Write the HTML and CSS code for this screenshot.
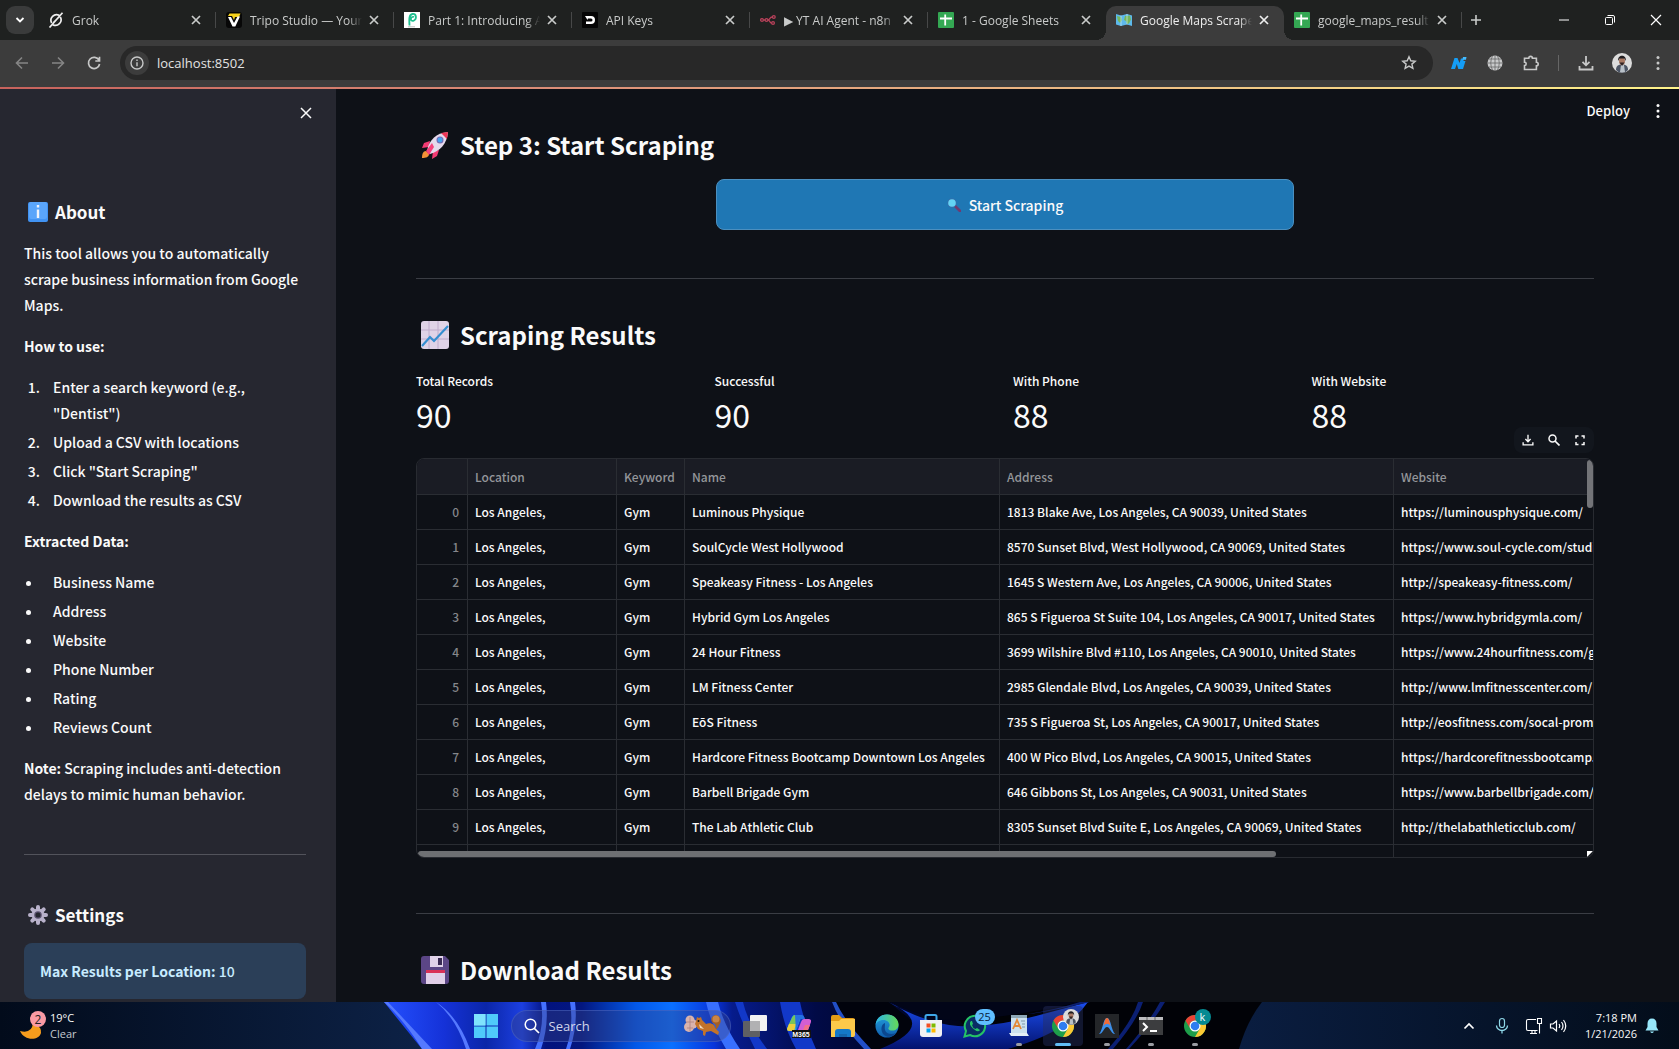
FILE: index.html
```html
<!DOCTYPE html>
<html lang="en">
  <head>
    <meta charset="utf-8" />
    <meta name="viewport" content="width=device-width, initial-scale=1.0" />
    <link rel="stylesheet" href="styles.css">
    <title>Google Maps Scraper</title>
  </head>

  <body>
    <!-- shared icons -->
    <svg class="sprite" aria-hidden="true">
      <symbol id="close" viewBox="0 0 16 16"><path d="M4 4l8 8M12 4l-8 8" stroke="currentColor" stroke-width="1.7" fill="none" /></symbol>
      <symbol id="sheets" viewBox="0 0 16 16">
        <rect width="16" height="16" rx="1" fill="#34a853" />
        <path d="M7.2 2.5v11M2 6.5h12" stroke="#fff" stroke-width="1.8" />
      </symbol>
      <symbol id="dots" viewBox="0 0 16 16"><circle cx="8" cy="2.6" r="1.5" /><circle cx="8" cy="8" r="1.5" /><circle cx="8" cy="13.4" r="1.5" /></symbol>
      <symbol id="download" viewBox="0 0 16 16"><path d="M8 1v9M4.5 6.8L8 10.3l3.500-3.500M1.500 11v3.500h13V11" fill="none" stroke="currentColor" stroke-width="1.800" /></symbol>
      <symbol id="chrome" viewBox="0 0 24 24">
        <circle cx="12" cy="12" r="11" fill="#1e9e4a" />
        <path d="M12 23A11 11 0 0 0 21.530 6.500H12l4.760 8.250z" fill="#fcc934" />
        <path d="M2.470 6.500a11 11 0 0 1 19.060 0H12a5.500 5.500 0 0 0-4.760 8.250z" fill="#ea4335" />
        <circle cx="12" cy="12" r="5.500" fill="#fff" />
        <circle cx="12" cy="12" r="4.300" fill="#2f7df0" />
      </symbol>
      <symbol id="person" viewBox="0 0 20 20">
        <circle cx="10" cy="10" r="10" fill="#dcdcdc" />
        <path d="M4 17c0-4 2-5.500 6-5.500s6 1.500 6 5.500l-3 2.500H7z" fill="#4c5565" />
        <path d="M9 12h3l1 7H8z" fill="#b9c1c8" />
        <ellipse cx="10" cy="8" rx="3" ry="4" fill="#a87862" />
        <path d="M6 8c-.5-7 8.500-7 8 0l-1.500-2.500h-5z" fill="#201d20" />
        <path d="M7.500 9.500h5L10 13z" fill="#302424" />
      </symbol>
    </svg>

    <header class="tabstrip">
      <button class="tab-search" aria-label="Search tabs">
        <svg width="12" height="12" viewBox="0 0 12 12"><path d="M2.500 4l3.500 3.500L9.500 4" fill="none" stroke="currentColor" stroke-width="1.800" /></svg>
      </button>
      <nav class="tabs">
        <div class="tab">
          <svg class="favicon" viewBox="0 0 16 16"><path d="M11.200 3.300A5.600 5.600 0 0 0 3.700 11M4.800 12.700A5.600 5.600 0 0 0 12.300 5M1.500 15.500L14.500.8M5.500 10.500L11 5" fill="none" stroke="#eee" stroke-width="1.700" /></svg>
          <span class="tab-title">Grok</span>
          <button class="tab-close" aria-label="Close tab"><svg><use href="#close" /></svg></button>
        </div>
        <div class="tab">
          <svg class="favicon" viewBox="0 0 16 16"><rect width="16" height="16" rx="3" fill="#070707" /><path d="M3.500 1.500h11L13 5H9L8 8 6 4H2z" fill="#f5d21b" /><path d="M2 5l4.500 9.500h2.800L14 4.500h-2.500L8 11 5 5z" fill="#fff" /></svg>
          <span class="tab-title">Tripo Studio — Your</span>
          <button class="tab-close" aria-label="Close tab"><svg><use href="#close" /></svg></button>
        </div>
        <div class="tab">
          <svg class="favicon" viewBox="0 0 16 16"><rect width="16" height="16" fill="#fff" /><path d="M5.500 13.500C5 7 5 2.500 8.500 2c4-.5 4.500 5 1.500 6.500-2 1-3.500 0-3-2 .5-1.500 2-2 3-1.500" fill="none" stroke="#1fbf8f" stroke-width="1.800" /><path d="M4 14.800h7" stroke="#bbb" /></svg>
          <span class="tab-title">Part 1: Introducing A</span>
          <button class="tab-close" aria-label="Close tab"><svg><use href="#close" /></svg></button>
        </div>
        <div class="tab">
          <svg class="favicon" viewBox="0 0 16 16"><rect width="16" height="16" rx="1" fill="#050505" /><path d="M3 4h6a4 4 0 0 1 0 8H4V9.500h5a1.500 1.500 0 0 0 0-3H6L5.500 8z" fill="#fff" /></svg>
          <span class="tab-title">API Keys</span>
          <button class="tab-close" aria-label="Close tab"><svg><use href="#close" /></svg></button>
        </div>
        <div class="tab">
          <svg class="favicon" viewBox="0 0 16 16"><g fill="none" stroke="#b8415a" stroke-width="1.300"><circle cx="2" cy="8" r="1.400" /><circle cx="6.500" cy="8" r="1.400" /><circle cx="13.800" cy="5" r="1.400" /><circle cx="13" cy="11" r="1.400" /><path d="M3.400 8H5M8 8c2 0 1.500-3 4.300-3M8 8c2 0 1.500 3 3.500 3" /></g></svg>
          <span class="tab-title">▶ YT AI Agent - n8n</span>
          <button class="tab-close" aria-label="Close tab"><svg><use href="#close" /></svg></button>
        </div>
        <div class="tab before-active">
          <svg class="favicon"><use href="#sheets" /></svg>
          <span class="tab-title">1 - Google Sheets</span>
          <button class="tab-close" aria-label="Close tab"><svg><use href="#close" /></svg></button>
        </div>
        <div class="tab active">
          <svg class="favicon" viewBox="0 0 16 16"><path d="M0 2l5 1.500 6-1.500 5 1.500V14l-5-1.500L5 14l-5-1.500z" fill="#5db9ec" /><path d="M1 4l4 1 1 3-2 3-2-2zM9 4l5-.5 1 4-2 4-2 .5-1-3-2-1z" fill="#76b75b" /><path d="M5 3.500V14M11 2v10.500" stroke="#c8e6f5" stroke-width=".7" /></svg>
          <span class="tab-title">Google Maps Scrape</span>
          <button class="tab-close" aria-label="Close tab"><svg><use href="#close" /></svg></button>
        </div>
        <div class="tab">
          <svg class="favicon"><use href="#sheets" /></svg>
          <span class="tab-title">google_maps_result</span>
          <button class="tab-close" aria-label="Close tab"><svg><use href="#close" /></svg></button>
        </div>
      </nav>
      <button class="new-tab" aria-label="New tab"><svg width="12" height="12" viewBox="0 0 12 12"><path d="M6 1v10M1 6h10" stroke="currentColor" stroke-width="1.600" /></svg></button>
      <div class="window-controls">
        <button aria-label="Minimize"><svg width="12" height="12" viewBox="0 0 12 12"><path d="M1 6h10" stroke="currentColor" /></svg></button>
        <button aria-label="Restore"><svg width="12" height="12" viewBox="0 0 12 12"><g fill="none" stroke="currentColor"><rect x="1.500" y="3.500" width="7" height="7" rx="1" /><path d="M3.500 1.500H9a1.500 1.500 0 0 1 1.500 1.500v5.500" /></g></svg></button>
        <button aria-label="Close window"><svg width="12" height="12" viewBox="0 0 12 12"><path d="M1 1l10 10M11 1L1 11" stroke="currentColor" stroke-width="1.200" /></svg></button>
      </div>
    </header>

    <div class="toolbar">
      <button class="tool dim" aria-label="Back"><svg viewBox="0 0 16 16"><path d="M14 8H3M8 2.500L2.500 8 8 13.500" fill="none" stroke="currentColor" stroke-width="1.600" /></svg></button>
      <button class="tool dim" aria-label="Forward"><svg viewBox="0 0 16 16"><path d="M2 8h11M8 2.500L13.500 8 8 13.500" fill="none" stroke="currentColor" stroke-width="1.600" /></svg></button>
      <button class="tool" aria-label="Reload"><svg viewBox="0 0 16 16"><path d="M13 5.200A5.600 5.600 0 1 0 13.600 9M13.500 1.800v4.200H9.300" fill="none" stroke="currentColor" stroke-width="1.700" /></svg></button>
      <div class="omnibox">
        <button class="site-info" aria-label="Site information"><svg width="14" height="14" viewBox="0 0 14 14"><circle cx="7" cy="7" r="6" fill="none" stroke="currentColor" stroke-width="1.400" /><path d="M7 6.200v4M7 3.400v1.500" stroke="currentColor" stroke-width="1.400" /></svg></button>
        <input class="url" type="text" aria-label="Address bar" value="localhost:8502" />
        <button class="star" aria-label="Bookmark"><svg width="16" height="16" viewBox="0 0 16 16"><path d="M8 1.800l1.800 4 4.400.4-3.300 2.900 1 4.300L8 11.100l-3.900 2.300 1-4.300L1.800 6.200l4.400-.4z" fill="none" stroke="currentColor" stroke-width="1.400" /></svg></button>
      </div>
      <div class="extensions">
        <button class="tool" aria-label="N extension"><svg viewBox="0 0 16 16"><path d="M0 14L3.500 3h3l2 5L10 3.500h3L10.500 14H7.300L5.800 9 4 14z" fill="#159df5" /><path d="M12 2h3.500L15 4.800h-3.500z" fill="#45bbff" /><path d="M11.500 6h3L12 14H9.500z" fill="#159df5" /></svg></button>
        <button class="tool" aria-label="Globe extension"><svg viewBox="0 0 16 16"><circle cx="8" cy="8" r="7.500" fill="#c9cacb" /><path d="M8 .5v15M.5 8h15M2 4h12M2 12h12M5.500 1Q2 8 5.500 15M10.500 1Q14 8 10.500 15" stroke="#666" fill="none" stroke-width=".8" /></svg></button>
        <button class="tool" aria-label="Extensions"><svg viewBox="0 0 16 16"><path d="M1.500 3.200h4.300a1.800 1.800 0 0 1 3.600 0h4v4a1.800 1.800 0 0 1 0 3.600v3.700H1.500v-4a1.700 1.700 0 0 0 0-3.400z" fill="none" stroke="currentColor" stroke-width="1.600" /></svg></button>
        <span class="divider"></span>
        <button class="tool" aria-label="Downloads"><svg><use href="#download" /></svg></button>
        <button class="tool avatar" aria-label="Profile"><svg><use href="#person" /></svg></button>
        <button class="tool" aria-label="Menu"><svg><use href="#dots" fill="currentColor" /></svg></button>
      </div>
    </div>

    <div class="app">
      <aside class="sidebar">
        <button class="sidebar-close" aria-label="Close sidebar"><svg width="12" height="12" viewBox="0 0 12 12"><path d="M1 1l10 10M11 1L1 11" stroke="currentColor" stroke-width="1.500" /></svg></button>
        <h3>
          <svg class="emoji" viewBox="0 0 20 20"><rect width="20" height="20" rx="2" fill="#4193f3" /><rect x="1" width="18" height="17" rx="2" fill="#5aa5fa" /><path d="M10 3v2.500M10 7.500V16" stroke="#f0f4fb" stroke-width="2.400" /></svg>
          About
        </h3>
        <p>This tool allows you to automatically scrape business information from Google Maps.</p>
        <p><strong>How to use:</strong></p>
        <ol>
          <li>Enter a search keyword (e.g., "Dentist")</li>
          <li>Upload a CSV with locations</li>
          <li>Click "Start Scraping"</li>
          <li>Download the results as CSV</li>
        </ol>
        <p><strong>Extracted Data:</strong></p>
        <ul>
          <li>Business Name</li>
          <li>Address</li>
          <li>Website</li>
          <li>Phone Number</li>
          <li>Rating</li>
          <li>Reviews Count</li>
        </ul>
        <p><strong>Note:</strong> Scraping includes anti-detection delays to mimic human behavior.</p>
        <hr />
        <h3>
          <svg class="emoji" viewBox="0 0 20 20"><g stroke="#b9b2cb" stroke-width="4" stroke-linecap="round"><path d="M10 2v16M2 10h16M4.300 4.300l11.400 11.400M15.700 4.300L4.300 15.700" /></g><circle cx="10" cy="10" r="6.500" fill="#b9b2cb" /><circle cx="10" cy="10" r="3.800" fill="#5c5370" /><circle cx="10" cy="10" r="2.500" fill="#262730" /></svg>
          Settings
        </h3>
        <div class="info"><strong>Max Results per Location:</strong> 10</div>
      </aside>

      <main class="content">
        <div class="app-actions">
          <button class="deploy">Deploy</button>
          <button class="app-menu" aria-label="App menu"><svg width="16" height="16"><use href="#dots" fill="currentColor" /></svg></button>
        </div>

        <h2>
          <svg class="emoji" viewBox="0 0 28 28"><path d="M1 27c0-4 1-7 4-7l3 3c0 3-3 4-7 4z" fill="#f39236" /><path d="M9 10l-6 2-2 5 7-1zM18 19l-2 6-5 3 1-8z" fill="#f23b73" /><path d="M6 20C8 9 15 2 27 1c-1 12-8 19-18 22z" fill="#e5d9ec" /><path d="M20 2l7-1-1 7z" fill="#ef3556" /><path d="M5 20l6-8 2 4-5 8z" fill="#f8417d" /><circle cx="19" cy="9" r="3.500" fill="#746cb6" /><circle cx="19" cy="9" r="2.400" fill="#45a5ec" /></svg>
          Step 3: Start Scraping
        </h2>
        <div class="button-row">
          <button class="primary">
            <svg width="14" height="14" viewBox="0 0 14 14"><path d="M8 8l5 5" stroke="#703a70" stroke-width="2.600" stroke-linecap="round" /><circle cx="5" cy="5" r="4.500" fill="#3d6ca8" /><circle cx="5" cy="5" r="3.800" fill="#64d3f4" /></svg>
            Start Scraping
          </button>
        </div>

        <hr />

        <h2>
          <svg class="emoji" viewBox="0 0 28 28"><rect width="28" height="28" rx="3" fill="#dfd3e7" /><path d="M8 0v28M17 0v28M0 9h28M0 18h28" stroke="#bfaccc" /><path d="M1 25l8-9 4 4L27 5" fill="none" stroke="#358ed0" stroke-width="2.200" /></svg>
          Scraping Results
        </h2>
        <div class="metrics">
          <div class="metric"><span class="label">Total Records</span><span class="value">90</span></div>
          <div class="metric"><span class="label">Successful</span><span class="value">90</span></div>
          <div class="metric"><span class="label">With Phone</span><span class="value">88</span></div>
          <div class="metric"><span class="label">With Website</span><span class="value">88</span></div>
        </div>

        <div class="dataframe">
          <div class="df-toolbar">
            <button aria-label="Download as CSV"><svg width="12" height="12"><use href="#download" /></svg></button>
            <button aria-label="Search"><svg width="12" height="12" viewBox="0 0 12 12"><circle cx="4.500" cy="4.500" r="3.500" fill="none" stroke="currentColor" stroke-width="1.500" /><path d="M7 7l4.500 4.500" stroke="currentColor" stroke-width="1.700" /></svg></button>
            <button aria-label="Fullscreen"><svg width="12" height="12" viewBox="0 0 12 12"><path d="M2 4.500V2h2.500M7.500 2H10v2.500M10 8v2.500H7.500M4.500 10.500H2V8" fill="none" stroke="currentColor" stroke-width="1.500" /></svg></button>
          </div>
          <div class="df-frame">
            <table>
              <colgroup><col class="c-index"><col class="c-location"><col class="c-keyword"><col class="c-name"><col class="c-address"><col></colgroup>
              <thead>
                <tr><th></th><th>Location</th><th>Keyword</th><th>Name</th><th>Address</th><th>Website</th></tr>
              </thead>
              <tbody>
                <tr><td>0</td><td>Los Angeles,</td><td>Gym</td><td>Luminous Physique</td><td>1813 Blake Ave, Los Angeles, CA 90039, United States</td><td>https://luminousphysique.com/</td></tr>
                <tr><td>1</td><td>Los Angeles,</td><td>Gym</td><td>SoulCycle West Hollywood</td><td>8570 Sunset Blvd, West Hollywood, CA 90069, United States</td><td>https://www.soul-cycle.com/studios</td></tr>
                <tr><td>2</td><td>Los Angeles,</td><td>Gym</td><td>Speakeasy Fitness - Los Angeles</td><td>1645 S Western Ave, Los Angeles, CA 90006, United States</td><td>http://speakeasy-fitness.com/</td></tr>
                <tr><td>3</td><td>Los Angeles,</td><td>Gym</td><td>Hybrid Gym Los Angeles</td><td>865 S Figueroa St Suite 104, Los Angeles, CA 90017, United States</td><td>https://www.hybridgymla.com/</td></tr>
                <tr><td>4</td><td>Los Angeles,</td><td>Gym</td><td>24 Hour Fitness</td><td>3699 Wilshire Blvd #110, Los Angeles, CA 90010, United States</td><td>https://www.24hourfitness.com/gyms</td></tr>
                <tr><td>5</td><td>Los Angeles,</td><td>Gym</td><td>LM Fitness Center</td><td>2985 Glendale Blvd, Los Angeles, CA 90039, United States</td><td>http://www.lmfitnesscenter.com/</td></tr>
                <tr><td>6</td><td>Los Angeles,</td><td>Gym</td><td>EōS Fitness</td><td>735 S Figueroa St, Los Angeles, CA 90017, United States</td><td>http://eosfitness.com/socal-promo</td></tr>
                <tr><td>7</td><td>Los Angeles,</td><td>Gym</td><td>Hardcore Fitness Bootcamp Downtown Los Angeles</td><td>400 W Pico Blvd, Los Angeles, CA 90015, United States</td><td>https://hardcorefitnessbootcamp.com</td></tr>
                <tr><td>8</td><td>Los Angeles,</td><td>Gym</td><td>Barbell Brigade Gym</td><td>646 Gibbons St, Los Angeles, CA 90031, United States</td><td>https://www.barbellbrigade.com/</td></tr>
                <tr><td>9</td><td>Los Angeles,</td><td>Gym</td><td>The Lab Athletic Club</td><td>8305 Sunset Blvd Suite E, Los Angeles, CA 90069, United States</td><td>http://thelabathleticclub.com/</td></tr>
                <tr><td></td><td></td><td></td><td></td><td></td><td></td></tr>
              </tbody>
            </table>
            <span class="scroll-y"></span>
            <span class="scroll-x"></span>
            <span class="scroll-corner"></span>
          </div>
        </div>

        <hr />

        <h2>
          <svg class="emoji" viewBox="0 0 28 28"><path d="M3 0h21l4 4v21a3 3 0 0 1-3 3H3a3 3 0 0 1-3-3V3a3 3 0 0 1 3-3z" fill="#5b4686" /><path d="M9 0h13v11H9z" fill="#dfd2e9" /><path d="M17 2h4v7h-4z" fill="#382a53" /><path d="M5 14h19v14H5z" fill="#e1d0e9" /><path d="M5 14h19v3H5z" fill="#d93158" /></svg>
          Download Results
        </h2>
      </main>
    </div>

    <footer class="taskbar">
      <svg class="wallpaper" viewBox="0 0 1679 47" preserveAspectRatio="none" aria-hidden="true">
        <defs>
          <linearGradient id="navy-left"><stop offset="0" stop-color="#020b1b" /><stop offset="1" stop-color="#0d2247" /></linearGradient>
          <linearGradient id="navy-right"><stop offset="0" stop-color="#0a1d40" /><stop offset="1" stop-color="#030d1a" /></linearGradient>
          <linearGradient id="bloom">
            <stop offset="0" stop-color="#2450ff" /><stop offset=".1" stop-color="#1532d8" /><stop offset=".17" stop-color="#0b26a8" />
            <stop offset=".23" stop-color="#1c3fe0" /><stop offset=".27" stop-color="#02127e" /><stop offset=".33" stop-color="#03177f" />
            <stop offset=".42" stop-color="#0358e8" /><stop offset=".48" stop-color="#0a70ff" /><stop offset=".55" stop-color="#0834dc" />
            <stop offset=".58" stop-color="#061b8c" /><stop offset=".72" stop-color="#010a46" /><stop offset="1" stop-color="#01030f" />
          </linearGradient>
          <linearGradient id="swell" x2="0" y2="1"><stop offset="0" stop-color="#1b4ef0" /><stop offset="1" stop-color="#03126e" /></linearGradient>
        </defs>
        <rect width="1679" height="47" fill="#010207" />
        <path d="M0 0h384l48 47H0z" fill="url(#navy-left)" />
        <path d="M384 0h560l40 47H422z" fill="url(#bloom)" />
        <path d="M384 0q20 18 38 47h10L388 0zM436 0q22 14 34 47h-4Q456 16 436 0z" fill="#5579ff" />
        <path d="M541 0q4 24-6 47h6q8-24 5-47zM570 0q4 24-4 47h4q8-24 5-47z" fill="#4571ff" />
        <path d="M706 0h12q6 24 22 47h-14Q710 20 706 0z" fill="#3970ff" />
        <path d="M735 0q8 24 20 47h12Q748 22 743 0zM780 0q4 26 16 47h20Q804 20 800 0z" fill="#1238c8" />
        <path d="M832 0q8 22 32 47h90Q900 12 890 0z" fill="#01030c" />
        <path d="M832 0q8 22 32 47h7Q845 20 836 0z" fill="#224fc7" />
        <path d="M888 0q40 22 70 24t78-10l52-14q-20 30-80 47H880q60-24 8-47z" fill="url(#swell)" />
        <path d="M890 0q40 20 75 18 60-5 116-18z" fill="#020518" />
        <path d="M1080 0q-26 8-52 12 20-2 62-12zM1138 0q-6 20-30 47h5q24-28 30-47zM1160 0q-12 22-34 47h3q24-26 36-47z" fill="#0b1f72" />
        <path d="M1262 0h417v47h-440q8-28 23-47z" fill="url(#navy-right)" />
      </svg>
      <button class="weather" aria-label="Weather">
        <svg width="28" height="30" viewBox="0 0 28 30"><path d="M1 20q12 3 13-8 9 4 8 10c-2 8-17 8-21-2z" fill="#f59c1d" /><circle cx="19" cy="8" r="8" fill="#f99aa4" /><text x="19" y="13" text-anchor="middle" class="weather-count">2</text></svg>
        <span><span class="temp">19°C</span><span class="sky">Clear</span></span>
      </button>
      <div class="dock">
        <button class="dock-item" aria-label="Start"><svg viewBox="0 0 24 24"><path d="M0 0h11.500v11.500H0zM12.500 0H24v11.500H12.500zM0 12.500h11.500V24H0zM12.500 12.500H24V24H12.500z" fill="#4fcbfb" /><path d="M0 0h11.500v11.500H0z" fill="#7fe3fd" /></svg></button>
        <label class="search">
          <svg width="16" height="16" viewBox="0 0 16 16"><circle cx="6.500" cy="6.500" r="5.300" fill="none" stroke="#fff" stroke-width="1.500" /><path d="M10.300 10.300l4.700 4.700" stroke="#fff" stroke-width="1.700" /></svg>
          <input type="text" placeholder="Search" aria-label="Search Windows" />
          <svg width="38" height="24" viewBox="0 0 38 24">
            <g fill="#d9b3ad"><circle cx="6" cy="6" r="4.500" /><circle cx="5" cy="13" r="5" /><circle cx="9" cy="10" r="4.500" /></g>
            <path d="M2 8h8M3 14h6M6 3v14" stroke="#af817b" stroke-width=".8" />
            <path d="M28 16c5 0 5-6 1-7-3-2-2-8 3-8 5 1 6 7 3 10-1 4-4 6-7 5z" fill="#a65f22" />
            <circle cx="32" cy="5" r="3.500" fill="#c98546" />
            <path d="M12 7l1-4 2 1 2-1 1 3 4 4c5-2 9 1 9 4l4 4-1 3-7-4-5 1-1 4-2-1v-4l-5-2-3-5z" fill="#c2722a" />
            <path d="M15 10l5 5-4-1z" fill="#f2d9bd" /><circle cx="14.500" cy="7" r="1" fill="#111" />
          </svg>
        </label>
        <button class="dock-item" aria-label="Task view"><svg viewBox="0 0 24 24"><rect y="7" width="17" height="16" rx="1" fill="#5f6064" /><rect x="7" y="1" width="17" height="16" rx="1" fill="#f2f2f2" /><path d="M7 7h10v10H8a1 1 0 0 1-1-1z" fill="#b1b1b3" /></svg></button>
        <button class="dock-item" aria-label="Microsoft 365 Copilot"><svg viewBox="0 0 24 24"><path d="M0 15L5 3q1-2 3-2h7l-5 13q-1 3-3 3H2q-2 0-2-2z" fill="#2ba9df" /><path d="M2 10l3-6q1-3 3-3h4L7 17H2q-3-1 0-7z" fill="#79c55b" /><path d="M0 15l2-5h7l-2 7H2q-2 0-2-2z" fill="#edcf3d" /><path d="M8 1h7q2 0 3 4h-5L9 17z" fill="#2570e2" /><path d="M14 8q1-3 3-3h5q3 1 2 3l-3 8H11z" fill="#d45ed2" /><path d="M18 11h5l-2 5h-5z" fill="#f37187" /><rect x="5" y="16" width="19" height="8" fill="#111" /><text x="14" y="23" text-anchor="middle" class="m365">M365</text></svg></button>
        <button class="dock-item" aria-label="File Explorer"><svg viewBox="0 0 24 24"><path d="M0 3q0-2 2-2h6l3 3h11q2 0 2 2v4H0z" fill="#e39c17" /><path d="M0 7h8l2-2h14v16q0 2-2 2H0z" fill="#fcc94a" /><path d="M4 23v-5q0-3 3-3h10q3 0 3 3v5z" fill="#1478c8" /><path d="M8 20h8v3H8z" fill="#1465ac" /></svg></button>
        <button class="dock-item" aria-label="Edge"><svg viewBox="0 0 24 24">
          <defs><linearGradient id="edge-top"><stop offset="0" stop-color="#2bb5e9" /><stop offset="1" stop-color="#65d957" /></linearGradient><linearGradient id="edge-low" x2="0" y2="1"><stop offset="0" stop-color="#22a0dd" /><stop offset="1" stop-color="#0f5dad" /></linearGradient></defs>
          <circle cx="12" cy="12" r="11.500" fill="url(#edge-low)" /><path d="M.6 11C1 4 6 .5 12 .5c7 0 11.500 5 11.500 10 0 4-3 6-6 6-4 0-5-2-3.500-3.500C16 10 13 6 8.500 6 4 6 1.500 8.500.6 11z" fill="url(#edge-top)" /><path d="M10 9c-4 1-5 8-1 12 4 3 9 2 12-2-5 2-10 1-11-3-.5-2 0-4 0-7z" fill="#0b478f" /></svg></button>
        <button class="dock-item" aria-label="Microsoft Store"><svg viewBox="0 0 24 24"><path d="M6.500 6V2.500q0-1.500 1.500-1.500h8q1.500 0 1.500 1.500V6" fill="none" stroke="#3ea6e8" stroke-width="2" /><path d="M1 6h22v14q0 3-3 3H4q-3 0-3-3z" fill="#f1f1f3" /><path d="M7.500 9.500h4v4h-4z" fill="#f25022" /><path d="M12.500 9.500h4v4h-4z" fill="#7fba00" /><path d="M7.500 14.500h4v4h-4z" fill="#00a4ef" /><path d="M12.500 14.500h4v4h-4z" fill="#ffb900" /></svg></button>
        <button class="dock-item" aria-label="WhatsApp"><svg viewBox="0 0 24 24"><path d="M1.500 22.500L3 17a10.200 10.200 0 1 1 4 4z" fill="#092c65" stroke="#25c366" stroke-width="2" /><path d="M8 7q-3 3 2 7.500t7 1.500l-3-2-1.500 1q-3-1-3.500-4l1-1L9 7z" fill="#25c366" /></svg><span class="badge">25</span></button>
        <button class="dock-item running" aria-label="Notepad"><svg viewBox="0 0 24 24"><path d="M4 1h16v20H4z" fill="#cbe0ee" /><path d="M4 1h16v3H4z" fill="#8da7b7" /><path d="M2 19h18l2 3H4z" fill="#e4eff6" /><path d="M6 15l4-9 4 9M7 12h6" stroke="#e38836" stroke-width="1.800" fill="none" /><path d="M14 7h4M15 10h3M15 13h3" stroke="#8099aa" /></svg></button>
        <button class="dock-item running current" aria-label="Chrome"><svg><use href="#chrome" /></svg><svg class="mini"><use href="#person" /></svg></button>
        <button class="dock-item running" aria-label="Antigravity"><svg viewBox="0 0 24 24"><path d="M0 0h24v24H0z" fill="#242629" /><path d="M4 20C8 16 8 4 12 4s4 12 8 16c-4 0-5-7-8-7s-4 7-8 7z" fill="#398fec" /><path d="M8.500 12C9.500 8 10 4 12 4s2.500 4 3.500 8c-2-3-5-3-7 0z" fill="#f36c35" /></svg></button>
        <button class="dock-item running" aria-label="Terminal"><svg viewBox="0 0 24 24"><path d="M0 3h24v18H0z" fill="#3c3d3f" /><path d="M0 3h24v3H0z" fill="#bcbcbe" /><path d="M16 3v3M8 3v3" stroke="#666" /><path d="M4 9l4 4-4 4M11 17h7" fill="none" stroke="#fff" stroke-width="2" /></svg></button>
        <button class="dock-item running" aria-label="Chrome, profile k"><svg><use href="#chrome" /></svg><span class="badge profile">k</span></button>
      </div>
      <div class="tray">
        <button aria-label="Show hidden icons"><svg width="12" height="12" viewBox="0 0 12 12"><path d="M1.500 8.500L6 4l4.500 4.500" fill="none" stroke="#fff" stroke-width="1.700" /></svg></button>
        <button class="mic" aria-label="Microphone"><svg width="16" height="18" viewBox="0 0 16 18"><rect x="5.500" y="1.500" width="5" height="9" rx="2.500" fill="none" stroke="#8fd8e8" stroke-width="1.200" /><path d="M2.500 8.500a5.500 5 0 0 0 11 0M8 13.500v3" fill="none" stroke="#8fd8e8" stroke-width="1.300" /></svg></button>
        <button class="net" aria-label="Network and volume">
          <svg width="18" height="18" viewBox="0 0 18 18"><path d="M11 2.500H3Q1.500 2.500 1.500 4v8q0 1.500 1.500 1.500h9.500M5 16.500h7M7 13.500v3M10 13.500v3M12.500 1.500h4v5h-4zM14.500 6.500v10" fill="none" stroke="#fff" stroke-width="1.100" /></svg>
          <svg width="18" height="16" viewBox="0 0 18 16"><path d="M1.500 6v4H4l3.500 3V3L4 6zM10 6q1.500 2 0 4M12.500 4q3 4 0 8M14.500 2q4.500 6 0 12" fill="none" stroke="#fff" stroke-width="1.200" /></svg>
        </button>
        <button class="clock"><span>7:18 PM</span><span>1/21/2026</span></button>
        <button aria-label="Notifications"><svg width="14" height="16" viewBox="0 0 14 16"><path d="M7 .5c3 0 4.500 2 4.500 5V9l2 3.500H.5L2.500 9V5.500c0-3 1.500-5 4.500-5zM5 13.500h4q-2 3-4 0z" fill="#98e8fb" /></svg></button>
      </div>
    </footer>
  </body>
</html>
```

FILE: styles.css
```css
* {
  box-sizing: border-box;
}

body {
  margin: 0;
  height: 100vh;
  display: flex;
  flex-direction: column;
  overflow: hidden;
  background: #0e1117;
  color: #fafafa;
  font-family: "Noto Sans CJK SC", "Noto Sans", sans-serif;
  font-size: 14px;
  font-weight: 500;
}

button,
input {
  font: inherit;
  color: inherit;
  background: none;
  border: 0;
  padding: 0;
  outline: none;
}

button {
  display: flex;
  align-items: center;
  justify-content: center;
}

svg {
  display: block;
  flex: none;
}

.sprite {
  position: absolute;
  width: 0;
  height: 0;
}

/* browser */
.tabstrip,
.toolbar,
.taskbar {
  flex: none;
  display: flex;
  font-family: "Open Sans", "Noto Sans", sans-serif;
  font-size: 12px;
  font-weight: 400;
}

.tabstrip {
  height: 40px;
  padding-left: 6px;
  background: #1f2120;
  color: #c9cbca;
}

.tab-search {
  width: 28px;
  height: 28px;
  margin: 6px 4px 0 0;
  border-radius: 9px;
  background: #3a3b3b;
  color: #fff;
}

.tabs {
  display: flex;
  flex: 0 1 1424px;
  min-width: 0;
}

.tab {
  position: relative;
  display: flex;
  align-items: center;
  flex: 1 1 0;
  min-width: 0;
  height: 34px;
  margin-top: 6px;
  padding: 0 12px 6px 10px;
}

.tab::after {
  content: "";
  position: absolute;
  right: 0;
  top: 6px;
  width: 1px;
  height: 16px;
  background: #474848;
}

.favicon {
  width: 16px;
  height: 16px;
  margin-right: 8px;
}

.tab-title {
  flex: 1;
  overflow: hidden;
  white-space: nowrap;
  mask-image: linear-gradient(90deg, #000 88%, transparent);
}

.tab-close {
  width: 16px;
  height: 16px;
  margin-left: 4px;
}

.tab-close svg {
  width: 16px;
  height: 16px;
}

.tab.active {
  background: #3c3c3c;
  color: #eee;
  border-radius: 10px 10px 0 0;
}

.tab.active::before,
.tab.active::after {
  content: "";
  position: absolute;
  top: auto;
  bottom: 0;
  width: 10px;
  height: 10px;
  background: radial-gradient(circle at 0 0, transparent 10px, #3c3c3c 10px);
}

.tab.active::before {
  left: -10px;
}

.tab.active::after {
  right: -10px;
  background: radial-gradient(circle at 100% 0, transparent 10px, #3c3c3c 10px);
}

.tab.before-active::after {
  display: none;
}

.new-tab {
  width: 28px;
  height: 40px;
}

.window-controls {
  display: flex;
  margin-left: auto;
  color: #fff;
}

.window-controls button {
  width: 46px;
  height: 40px;
}

.toolbar {
  height: 47px;
  align-items: center;
  padding: 0 3px 2px 4px;
  background: #3c3c3c;
  color: #c7c8c8;
}

.tool {
  width: 36px;
  height: 32px;
}

.tool svg {
  width: 16px;
  height: 16px;
}

.tool.dim {
  color: #858585;
}

.omnibox {
  flex: 1;
  display: flex;
  align-items: center;
  height: 34px;
  margin-left: 8px;
  padding: 0 16px 0 5px;
  border-radius: 17px;
  background: #282828;
}

.site-info {
  width: 24px;
  height: 24px;
  margin-right: 8px;
  border-radius: 12px;
  background: #3c3c3c;
}

.url {
  flex: 1;
  min-width: 0;
  font-size: 13px;
  color: #e3e3e3;
}

.extensions {
  display: flex;
  align-items: center;
  padding-left: 8px;
}

.divider {
  width: 1px;
  height: 16px;
  margin: 0 9px;
  background: #666;
}

.avatar svg {
  width: 20px;
  height: 20px;
}

/* app */
.app {
  position: relative;
  flex: 1;
  min-height: 0;
  display: flex;
  border-top: 2px solid #ff7d6b;
  border-image: linear-gradient(90deg, #c7625c, #dc8e78 33%, #edbc84 66%, #fff38a) 1;
  overflow: hidden;
}

.sidebar {
  flex: none;
  width: 336px;
  padding: 0 30px 0 24px;
  overflow: hidden;
  background: #262730;
  line-height: 26px;
}

.sidebar-close {
  width: 24px;
  height: 24px;
  margin: 12px -12px 73px auto;
}

h2,
h3 {
  display: flex;
  align-items: center;
  margin: 0;
  font-weight: 700;
}

h3 {
  padding-left: 4px;
  margin-bottom: 14px;
  gap: 7px;
  font-size: 17px;
  line-height: 28px;
}

h3 .emoji {
  width: 20px;
  height: 20px;
}

p {
  margin: 0 0 15px;
}

.sidebar ol,
.sidebar ul {
  margin: 0 0 15px;
  padding-left: 19px;
}

.sidebar li {
  margin-bottom: 3px;
  padding-left: 10px;
}

.sidebar li:last-child {
  margin-bottom: 0;
}

hr {
  height: 1px;
  margin: 0;
  border: 0;
  background: #3a3d44;
}

.sidebar hr {
  margin: 47px 0 46px;
  background: #52535b;
}

.info {
  padding: 15px 16px;
  border-radius: 8px;
  background: #2b3f58;
  color: #c7ebff;
}

.content {
  flex: 1;
  min-width: 0;
  padding: 39px 85px 0 80px;
  overflow: hidden;
}

.app-actions {
  position: absolute;
  top: 10px;
  right: 13px;
  display: flex;
  align-items: center;
  gap: 20px;
  line-height: 24px;
  font-size: 13px;
}

h2 {
  padding-left: 5px;
  gap: 11px;
  font-size: 24px;
  line-height: 34px;
}

h2 .emoji {
  width: 28px;
  height: 28px;
}

.button-row {
  display: flex;
  justify-content: center;
  margin: 17px 0 48px;
}

.primary {
  flex: 0 1 49%;
  height: 51px;
  gap: 8px;
  border: 1px solid #4b8fbf;
  border-radius: 8px;
  background: #1f77b4;
}

.content hr + h2 {
  margin-top: 39px;
}

.metrics {
  display: grid;
  grid-template-columns: repeat(4, 1fr);
  gap: 16px;
  margin: 19px 0 20px;
}

.metric {
  display: flex;
  flex-direction: column;
}

.label {
  font-size: 12px;
  line-height: 20px;
}

.value {
  font-size: 32px;
  font-weight: 400;
  line-height: 47px;
}

.dataframe {
  position: relative;
  margin-bottom: 55px;
}

.df-toolbar {
  position: absolute;
  right: 0;
  bottom: 100%;
  display: flex;
  margin-bottom: 5px;
  padding: 1px;
  border-radius: 8px;
  background: #12161d;
}

.df-toolbar button {
  width: 26px;
  height: 24px;
}

.df-frame {
  position: relative;
  height: 400px;
  border: 1px solid #282b31;
  border-radius: 8px;
  overflow: hidden;
}

table {
  width: 100%;
  table-layout: fixed;
  border-collapse: separate;
  border-spacing: 0;
  font-size: 12px;
  line-height: 18px;
}

.c-index {
  width: 51px;
}

.c-location {
  width: 149px;
}

.c-keyword {
  width: 68px;
}

.c-name {
  width: 315px;
}

.c-address {
  width: 394px;
}

th,
td {
  height: 35px;
  padding: 0 0 0 7px;
  border-right: 1px solid #2a2d33;
  border-bottom: 1px solid #2a2d33;
  text-align: left;
  white-space: nowrap;
  overflow: hidden;
}

th {
  height: 36px;
  background: #1a1c24;
  color: #94969a;
  font-weight: 500;
}

th:last-child,
td:last-child {
  border-right: 0;
}

td:first-child {
  padding: 0 8px 0 0;
  color: #85878b;
  text-align: right;
}

.scroll-y,
.scroll-x,
.scroll-corner {
  position: absolute;
}

.scroll-y {
  top: 1px;
  right: 0;
  width: 6px;
  height: 48px;
  border-radius: 3px;
  background: #737478;
}

.scroll-x {
  left: 1px;
  bottom: 0;
  width: 73%;
  height: 6px;
  border-radius: 3px;
  background: #6e7073;
}

.scroll-corner {
  right: 0;
  bottom: 0;
  width: 6px;
  height: 6px;
  background: #fff;
  clip-path: polygon(0 0, 100% 0, 0 100%);
}

/* taskbar */
.taskbar {
  position: relative;
  height: 47px;
  align-items: center;
  justify-content: space-between;
  font-size: 11px;
}

.wallpaper {
  position: absolute;
  inset: 0;
  width: 100%;
  height: 100%;
}

.weather,
.dock,
.tray {
  position: relative;
  display: flex;
  align-items: center;
}

.dock {
  margin-left: 2px;
}

.weather,
.tray {
  flex: 1 1 0;
}

.weather {
  justify-content: flex-start;
  gap: 3px;
  padding-left: 19px;
  text-align: left;
  line-height: 16px;
}

.weather-count {
  font-size: 12px;
  fill: #222;
}

.temp,
.sky,
.clock span {
  display: block;
}

.sky {
  color: #c4c9d0;
}

.dock-item {
  position: relative;
  width: 40px;
  height: 40px;
  margin: 0 2px;
  border-radius: 4px;
}

.dock-item svg {
  width: 24px;
  height: 24px;
}

.dock-item .mini {
  position: absolute;
  top: 3px;
  right: 4px;
  width: 16px;
  height: 16px;
}

.m365 {
  font-family: "Liberation Sans", sans-serif;
  font-weight: 700;
  font-size: 7px;
  fill: #fff;
}

.search {
  display: flex;
  align-items: center;
  width: 220px;
  height: 32px;
  margin: 0 2px 0 3px;
  padding: 0 8px 0 12px;
  gap: 9px;
  border: 1px solid #5069c680;
  border-radius: 16px;
  background: #38448566;
}

.search input {
  flex: 1;
  min-width: 0;
  font-size: 13px;
}

.search input::placeholder {
  color: #d0d5eb;
  opacity: 1;
}

.badge {
  position: absolute;
  top: 3px;
  right: 0;
  min-width: 20px;
  height: 16px;
  border-radius: 8px;
  background: #60bfff;
  color: #07213c;
  line-height: 16px;
}

.badge.profile {
  right: 4px;
  min-width: 16px;
  background: #058a92;
  color: #fff;
}

.running::after {
  content: "";
  position: absolute;
  left: 17px;
  bottom: 0;
  width: 6px;
  height: 3px;
  border-radius: 2px;
  background: #9a9ca2;
}

.current {
  background: #252e6073;
}

.current::after {
  left: 12px;
  width: 16px;
  background: #62bdf5;
}

.tray {
  justify-content: flex-end;
  gap: 8px;
  padding-right: 20px;
}

.mic {
  margin: 0 7px 0 11px;
}

.net {
  gap: 6px;
}

.clock {
  display: block;
  margin-left: 10px;
  line-height: 16px;
  text-align: right;
}
```
